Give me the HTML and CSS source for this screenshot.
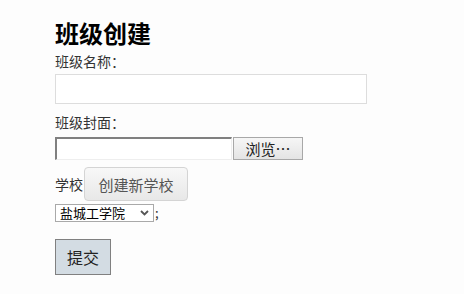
FILE: index.html
```html
<!DOCTYPE html>
<html lang="zh-CN">
<head>
    <meta charset="UTF-8">
    <meta name="viewport" content="width=device-width, initial-scale=1.0">
    <title>班级创建</title>
    <link rel="stylesheet" href="styles.css">
</head>
<body>
    <div class="container">
        <h1>班级创建</h1>
        <form id="class-form">
            <label class="field-label" for="class-name">班级名称：</label>
            <input type="text" id="class-name" class="text-input">

            <label class="field-label">班级封面：</label>
            <div class="file-picker">
                <span class="file-path"></span>
                <button type="button" class="file-btn">浏览…</button>
            </div>

            <div class="school-row">
                <span class="field-label inline">学校：</span>
                <button type="button" class="new-school-btn">创建新学校</button>
            </div>
            <div class="select-row">
                <span class="fake-select">
                    <span>盐城工学院</span>
                    <svg width="9" height="6" viewBox="0 0 9 6"><path d="M1 1 L4.5 4.5 L8 1" fill="none" stroke="#555" stroke-width="1.8"/></svg>
                </span>
                <span class="semi">;</span>
            </div>

            <button type="submit" class="submit-btn">提交</button>
        </form>
    </div>
</body>
</html>
```

FILE: styles.css
```css
body {
    margin: 0;
    background-color: #fdfdfd;
    color: #333;
    font-family: "Noto Sans CJK SC", "Liberation Sans", sans-serif;
}

.container {
    padding: 18px 0 0 55px;
}

h1 {
    margin: 0 0 4px;
    font-size: 24px;
    line-height: 30px;
    font-weight: bold;
    color: #000;
}

.field-label {
    display: block;
    font-size: 14px;
    line-height: 18px;
    color: #333;
}

.field-label.inline {
    display: inline;
}

.text-input {
    display: block;
    box-sizing: border-box;
    width: 312px;
    height: 30px;
    margin: 4px 0 9px;
    border: 1px solid #ddd;
    background: #fff;
}

.file-picker {
    display: flex;
    margin-top: 6px;
    height: 23px;
}

.file-path {
    box-sizing: border-box;
    width: 177px;
    height: 23px;
    border-style: solid;
    border-width: 2px 1px 1px 2px;
    border-color: #808080 #eee #eee #808080;
    background: #fff;
}

.file-btn {
    box-sizing: border-box;
    width: 70px;
    height: 23px;
    margin-left: 1px;
    padding: 0;
    border: 1px solid #a8a8a8;
    background: linear-gradient(#f6f6f6, #e4e4e4);
    font-family: inherit;
    font-size: 15px;
    color: #222;
}

.school-row {
    position: relative;
    height: 34px;
    margin-top: 7px;
    display: flex;
    align-items: center;
}

.new-school-btn {
    position: absolute;
    left: 29px;
    top: 0;
    box-sizing: border-box;
    width: 104px;
    height: 34px;
    border: 1px solid #d4d4d4;
    border-radius: 4px;
    background: linear-gradient(#f8f8f8, #e8e8e8);
    font-family: inherit;
    font-size: 15px;
    color: #555;
}

.select-row {
    display: flex;
    align-items: center;
    height: 18px;
    line-height: 18px;
    margin-top: 3px;
}

.fake-select {
    box-sizing: border-box;
    display: inline-flex;
    align-items: center;
    justify-content: space-between;
    width: 99px;
    height: 18px;
    padding: 0 4px;
    border: 1px solid #a9a9a9;
    background: #fff;
    font-size: 13px;
    color: #000;
}

.semi {
    font-size: 13px;
    margin-left: 1px;
}

.submit-btn {
    display: block;
    box-sizing: border-box;
    width: 56px;
    height: 36px;
    margin-top: 17px;
    border: 1px solid #808080;
    background-color: #d3dce3;
    font-family: inherit;
    font-size: 16px;
    color: #222;
}
```
